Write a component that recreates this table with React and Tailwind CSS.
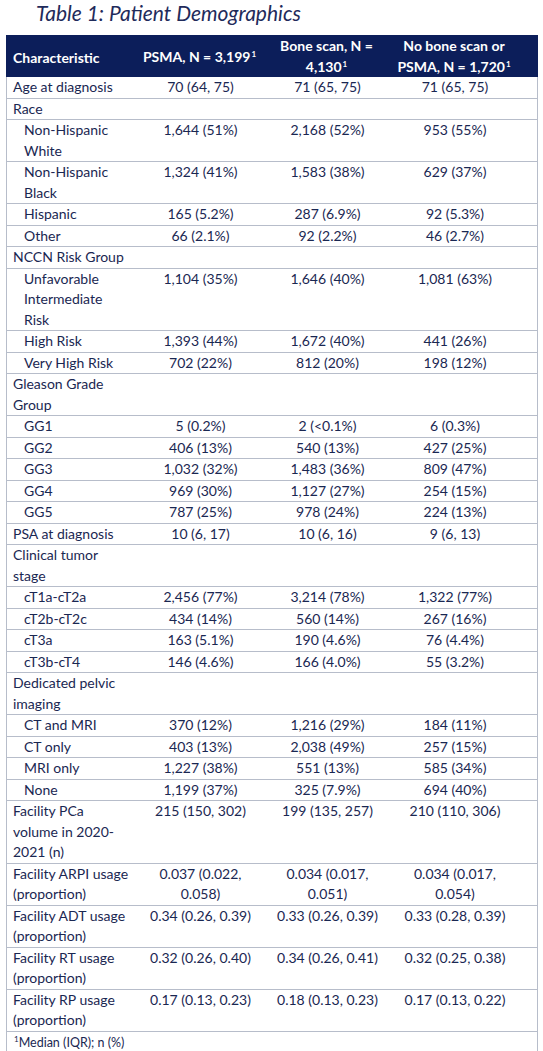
import React from "react";

const rows = [
  { l: ["Age at diagnosis"], v: ["70 (64, 75)", "71 (65, 75)", "71 (65, 75)"] },
  { l: ["Race"] },
  { l: ["Non-Hispanic", "White"], i: true, v: ["1,644 (51%)", "2,168 (52%)", "953 (55%)"] },
  { l: ["Non-Hispanic", "Black"], i: true, v: ["1,324 (41%)", "1,583 (38%)", "629 (37%)"] },
  { l: ["Hispanic"], i: true, v: ["165 (5.2%)", "287 (6.9%)", "92 (5.3%)"] },
  { l: ["Other"], i: true, v: ["66 (2.1%)", "92 (2.2%)", "46 (2.7%)"] },
  { l: ["NCCN Risk Group"] },
  { l: ["Unfavorable", "Intermediate", "Risk"], i: true, v: ["1,104 (35%)", "1,646 (40%)", "1,081 (63%)"] },
  { l: ["High Risk"], i: true, v: ["1,393 (44%)", "1,672 (40%)", "441 (26%)"] },
  { l: ["Very High Risk"], i: true, v: ["702 (22%)", "812 (20%)", "198 (12%)"] },
  { l: ["Gleason Grade", "Group"] },
  { l: ["GG1"], i: true, v: ["5 (0.2%)", "2 (<0.1%)", "6 (0.3%)"] },
  { l: ["GG2"], i: true, v: ["406 (13%)", "540 (13%)", "427 (25%)"] },
  { l: ["GG3"], i: true, v: ["1,032 (32%)", "1,483 (36%)", "809 (47%)"] },
  { l: ["GG4"], i: true, v: ["969 (30%)", "1,127 (27%)", "254 (15%)"] },
  { l: ["GG5"], i: true, v: ["787 (25%)", "978 (24%)", "224 (13%)"] },
  { l: ["PSA at diagnosis"], v: ["10 (6, 17)", "10 (6, 16)", "9 (6, 13)"] },
  { l: ["Clinical tumor", "stage"] },
  { l: ["cT1a-cT2a"], i: true, v: ["2,456 (77%)", "3,214 (78%)", "1,322 (77%)"] },
  { l: ["cT2b-cT2c"], i: true, v: ["434 (14%)", "560 (14%)", "267 (16%)"] },
  { l: ["cT3a"], i: true, v: ["163 (5.1%)", "190 (4.6%)", "76 (4.4%)"] },
  { l: ["cT3b-cT4"], i: true, v: ["146 (4.6%)", "166 (4.0%)", "55 (3.2%)"] },
  { l: ["Dedicated pelvic", "imaging"] },
  { l: ["CT and MRI"], i: true, v: ["370 (12%)", "1,216 (29%)", "184 (11%)"] },
  { l: ["CT only"], i: true, v: ["403 (13%)", "2,038 (49%)", "257 (15%)"] },
  { l: ["MRI only"], i: true, v: ["1,227 (38%)", "551 (13%)", "585 (34%)"] },
  { l: ["None"], i: true, v: ["1,199 (37%)", "325 (7.9%)", "694 (40%)"] },
  { l: ["Facility PCa", "volume in 2020-", "2021 (n)"], v: [["215 (150, 302)"], ["199 (135, 257)"], ["210 (110, 306)"]] },
  { l: ["Facility ARPI usage", "(proportion)"], v: [["0.037 (0.022,", "0.058)"], ["0.034 (0.017,", "0.051)"], ["0.034 (0.017,", "0.054)"]] },
  { l: ["Facility ADT usage", "(proportion)"], v: ["0.34 (0.26, 0.39)", "0.33 (0.26, 0.39)", "0.33 (0.28, 0.39)"] },
  { l: ["Facility RT usage", "(proportion)"], v: ["0.32 (0.26, 0.40)", "0.34 (0.26, 0.41)", "0.32 (0.25, 0.38)"] },
  { l: ["Facility RP usage", "(proportion)"], v: ["0.17 (0.13, 0.23)", "0.18 (0.13, 0.23)", "0.17 (0.13, 0.22)"] },
];

function Lines({ items }) {
  const arr = Array.isArray(items) ? items : [items];
  return arr.map((t, k) => (
    <div key={k} className="whitespace-nowrap">
      {t}
    </div>
  ));
}

const Sup = () => <span className="text-[8px] relative -top-[5px] ml-[1px]">1</span>;

export default function App() {
  return (
    <div
      className="w-[543px] h-[1051px] bg-white overflow-hidden text-[#1a2752]"
      style={{ fontFamily: "Lato, 'Open Sans', sans-serif" }}
    >
      <div className="pl-[36px] pt-[1px] h-[35px] text-[21px] italic text-[#1f2b5b] leading-[24px]">
        Table 1: Patient Demographics
      </div>
      <div className="ml-[6px] w-[532px] border-l border-r border-[#b7bdca]">
        <div className="grid grid-cols-[130px_127px_127px_148px] bg-[#0c1e5a] text-white font-bold text-[14px] leading-[21px] h-[42px] -mr-[1px] -ml-[1px]">
          <div className="flex items-center pl-[7px]">Characteristic</div>
          <div className="flex items-center justify-center">
            <span>PSMA, N = 3,199<Sup /></span>
          </div>
          <div className="flex flex-col items-center justify-center">
            <div>Bone scan, N =</div>
            <div>4,130<Sup /></div>
          </div>
          <div className="flex flex-col items-center justify-center pr-[20px]">
            <div>No bone scan or</div>
            <div>PSMA, N = 1,720<Sup /></div>
          </div>
        </div>
        {rows.map((r, idx) => (
          <div
            key={idx}
            className={`grid grid-cols-[130px_127px_127px_148px] text-[14px] leading-[20.5px] ${idx === 0 ? "" : "border-t border-[#b7bdca]"}`}
          >
            <div className={r.i ? "pl-[17px]" : "pl-[6px]"}>
              <Lines items={r.l} />
            </div>
            {r.v ? (
              <>
                <div className="text-center">
                  <Lines items={r.v[0]} />
                </div>
                <div className="text-center">
                  <Lines items={r.v[1]} />
                </div>
                <div className="text-center pr-[20px]">
                  <Lines items={r.v[2]} />
                </div>
              </>
            ) : (
              <>
                <div />
                <div />
                <div />
              </>
            )}
          </div>
        ))}
        <div className="border-t border-[#b7bdca] pl-[6px] pt-[1px] text-[12.5px] leading-[20px] h-[30px]">
          <Sup />Median (IQR); n (%)
        </div>
      </div>
    </div>
  );
}
